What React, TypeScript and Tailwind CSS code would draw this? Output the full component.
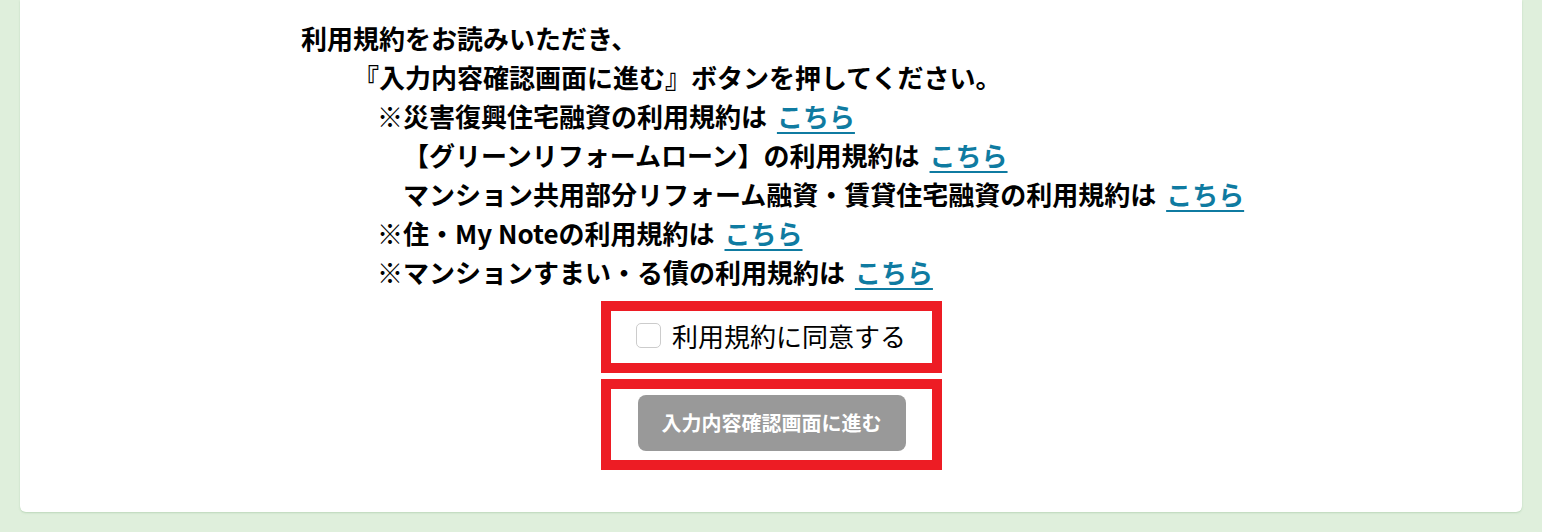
import React from "react";

function Link() {
  return (
    <a
      href="#"
      className="ml-1 text-[#0f7ba1] underline decoration-[2px] underline-offset-[5px]"
    >
      こちら
    </a>
  );
}

export default function App() {
  return (
    <div
      className="min-h-[532px] w-full bg-[#dfefdc] px-5 pb-5"
      style={{ fontFamily: '"Noto Sans CJK JP", "Noto Sans", sans-serif' }}
    >
      <div className="rounded-b-md bg-white pt-[18px] pb-[42px] shadow-[0_1px_2px_rgba(120,170,120,0.35)]">
        <div className="pl-[281px] text-[26px] font-bold leading-[39px] text-black">
          <p>利用規約をお読みいただき、</p>
          <p className="pl-[52px]">『入力内容確認画面に進む』ボタンを押してください。</p>
          <p className="pl-[76px]">
            ※災害復興住宅融資の利用規約は <Link />
          </p>
          <p className="pl-[102px]">
            【グリーンリフォームローン】の利用規約は <Link />
          </p>
          <p className="pl-[102px]">
            マンション共用部分リフォーム融資・賃貸住宅融資の利用規約は <Link />
          </p>
          <p className="pl-[76px]">
            ※住・My Noteの利用規約は <Link />
          </p>
          <p className="pl-[76px]">
            ※マンションすまい・る債の利用規約は <Link />
          </p>
        </div>
        <div className="mt-[10px] flex flex-col items-center">
          <div className="flex h-[72px] w-[341px] items-center justify-center gap-[11px] border-[10px] border-[#ed1c24] pb-[3px]">
            <span className="block h-[25px] w-[25px] rounded-[5px] border border-[#cccccc] bg-white" />
            <span className="text-[26px] font-normal leading-[39px] text-black">
              利用規約に同意する
            </span>
          </div>
          <div className="mt-[6px] flex h-[91px] w-[341px] justify-center border-[10px] border-[#ed1c24] pt-[6px] pl-[1px]">
            <button
              type="button"
              className="flex h-[56px] w-[268px] items-center justify-center rounded-lg bg-[#999999] text-[20px] font-bold text-white"
            >
              入力内容確認画面に進む
            </button>
          </div>
        </div>
      </div>
    </div>
  );
}
